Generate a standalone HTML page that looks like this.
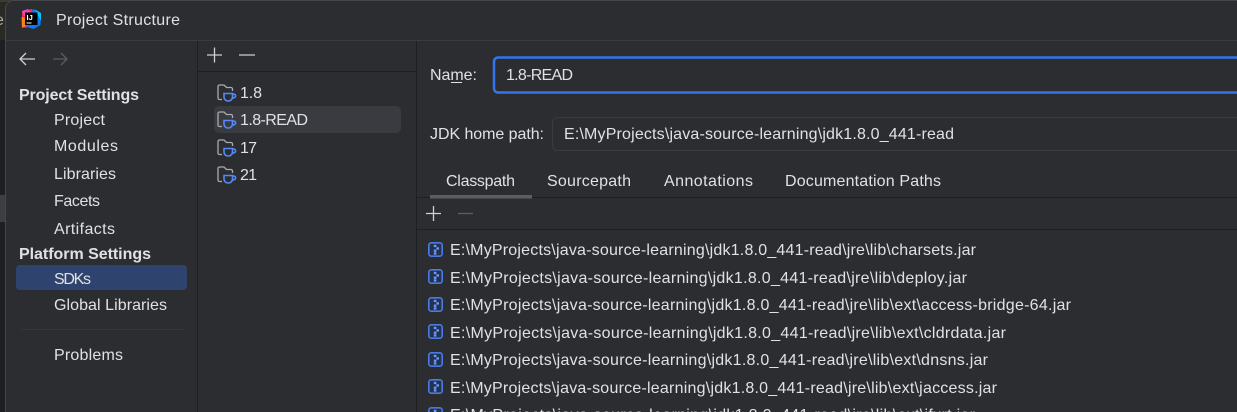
<!DOCTYPE html>
<html><head><meta charset="utf-8"><style>
html,body{margin:0;padding:0;width:1237px;height:412px;overflow:hidden;background:#1e1f22}
svg{display:block}
text{font-family:"Liberation Sans",sans-serif;font-size:16px;fill:#dfe1e5}
.b{font-weight:bold}
.f{fill:none;stroke:#a8abb0;stroke-width:1.3}
.c{fill:none;stroke:#548af7;stroke-width:1.6}
.j{fill:#25324f;stroke:#4a7be0;stroke-width:1.6}
.d{fill:#6b9bfa}
.t{stroke:#ced0d6;stroke-width:1.3;fill:none}
</style></head><body>
<svg width="1237" height="412" viewBox="0 0 1237 412" xmlns="http://www.w3.org/2000/svg">
<defs>
<g id="sdk">
<path class="f" d="M5 15.500H2.500a1.500 1.500 0 0 1-1.500-1.500V2.500a1.500 1.500 0 0 1 1.500-1.500H7l2.500 2.500h4.500a1.500 1.500 0 0 1 1.500 1.500V7"/>
<path class="c" d="M7 9.500h8.500v3.500a4 4 0 0 1-4 4h-.5a4 4 0 0 1-4-4z"/>
<path class="c" d="M15.500 10h1.200a1.900 1.900 0 0 1 0 3.800h-1.400"/>
</g>
<g id="jar">
<rect class="j" x=".8" y=".8" width="13.400" height="13.400" rx="2.500"/>
<rect class="d" x="5.800" y="2.800" width="2.600" height="2.300"/>
<rect class="d" x="8.400" y="5.300" width="2.600" height="2.300"/>
<rect class="d" x="5.800" y="7.600" width="2.600" height="2.300"/>
<rect class="d" x="5.800" y="10.300" width="2.600" height="2.300"/>
</g>
</defs>

<rect width="1237" height="412" fill="#1e1f22"/>
<rect width="6" height="40" fill="#2a2a24"/>
<rect width="1237" height="2" fill="#3d3c2f"/>
<rect x="0" y="195" width="5" height="27" fill="#3c3e41"/>
<text x="-5" y="25" style="fill:#a9a99c">e</text>
<text x="-6" y="105" style="fill:#8a8c90">r</text>

<rect x="5.500" y=".5" width="1240" height="420" rx="8" fill="#2b2d30" stroke="#45474b"/>
<rect x="6" y="40" width="1231" height="1" fill="#393b40"/>
<rect x="197" y="41" width="1" height="371" fill="#1e1f22"/>
<rect x="416" y="41" width="1" height="371" fill="#1e1f22"/>
<rect x="198" y="71" width="218" height="1" fill="#1e1f22"/>

<!-- logo -->
<path d="M22 11l10-2 2 9-8 10-4-1z" fill="#fe2857"/>
<path d="M22 11l6-2 3 4-7 3z" fill="#e84bc0"/>
<path d="M21.500 17l5 1-1 8-3.500 2z" fill="#fc801d"/>
<path d="M33 9l8 4-.500 12-7 4-7-2z" fill="#087cfa"/>
<path d="M35 9.500l6 3.500v8z" fill="#07c3f2"/>
<rect x="25" y="12.500" width="12.500" height="12.500" fill="#000"/>
<text x="26.500" y="20" class="b" style="font-size:7.500px;fill:#fff">IJ</text>
<rect x="26.500" y="22.500" width="5" height="1" fill="#fff"/>
<text x="56" y="25" textLength="124" lengthAdjust="spacing">Project Structure</text>

<!-- nav arrows -->
<path d="M35 59H20M26 53l-6 6 6 6" fill="none" stroke="#ced0d6" stroke-width="1.300"/>
<path d="M53 59h14M61 53l6 6-6 6" fill="none" stroke="#5a5d63" stroke-width="1.300"/>

<!-- sidebar -->
<rect x="16" y="265" width="171" height="25" rx="4" fill="#2e436e"/>
<text x="19" y="100" class="b" textLength="120" lengthAdjust="spacing">Project Settings</text>
<text x="54" y="125" textLength="51" lengthAdjust="spacing">Project</text>
<text x="54" y="151" textLength="64" lengthAdjust="spacing">Modules</text>
<text x="54" y="179" textLength="62" lengthAdjust="spacing">Libraries</text>
<text x="54" y="206" textLength="46" lengthAdjust="spacing">Facets</text>
<text x="54" y="234" textLength="61" lengthAdjust="spacing">Artifacts</text>
<text x="19" y="259" class="b" textLength="132" lengthAdjust="spacing">Platform Settings</text>
<text x="54" y="284" textLength="37" lengthAdjust="spacing">SDKs</text>
<text x="54" y="310" textLength="113" lengthAdjust="spacing">Global Libraries</text>
<rect x="22" y="329" width="163" height="1" fill="#35373b"/>
<text x="54" y="360" textLength="69" lengthAdjust="spacing">Problems</text>

<!-- SDK list -->
<path class="t" d="M214.500 47.500v15M207 55h15M239 55h16"/>
<rect x="214" y="106" width="187" height="27" rx="5" fill="#393b40"/>
<use href="#sdk" x="217" y="84"/>
<use href="#sdk" x="217" y="111"/>
<use href="#sdk" x="217" y="139"/>
<use href="#sdk" x="217" y="166"/>
<text x="240" y="98" textLength="22" lengthAdjust="spacing">1.8</text>
<text x="240" y="125" textLength="68" lengthAdjust="spacing">1.8-READ</text>
<text x="240" y="153" textLength="17" lengthAdjust="spacing">17</text>
<text x="240" y="180" textLength="17" lengthAdjust="spacing">21</text>

<!-- form -->
<text x="430" y="80" textLength="47" lengthAdjust="spacing">Name:</text>
<rect x="451" y="82" width="11" height="1" fill="#dfe1e5"/>
<rect x="494" y="57.500" width="760" height="35" rx="4" fill="#2b2d30" stroke="#3574f0" stroke-width="2.500"/>
<text x="506" y="80" textLength="67" lengthAdjust="spacing">1.8-READ</text>
<text x="430" y="139" textLength="114" lengthAdjust="spacing">JDK home path:</text>
<rect x="552.500" y="117.500" width="760" height="33" rx="5" fill="#2b2d30" stroke="#393b40"/>
<text x="564" y="139" textLength="390" lengthAdjust="spacing">E:\MyProjects\java-source-learning\jdk1.8.0_441-read</text>

<!-- tabs -->
<text x="446" y="186" textLength="69" lengthAdjust="spacing">Classpath</text>
<text x="547" y="186" textLength="84" lengthAdjust="spacing">Sourcepath</text>
<text x="664" y="186" textLength="89" lengthAdjust="spacing">Annotations</text>
<text x="785" y="186" textLength="156" lengthAdjust="spacing">Documentation Paths</text>
<rect x="417" y="197" width="820" height="1" fill="#1e1f22"/>
<rect x="430" y="195" width="102" height="3.500" fill="#5a5d63"/>
<path class="t" d="M433.500 206v15M426 213.500h15"/>
<path d="M458 213.500h15" stroke="#5a5d63" stroke-width="1.300"/>
<rect x="417" y="229" width="820" height="1" fill="#1e1f22"/>

<!-- classpath list -->
<use href="#jar" x="428" y="242"/>
<use href="#jar" x="428" y="269"/>
<use href="#jar" x="428" y="297"/>
<use href="#jar" x="428" y="324"/>
<use href="#jar" x="428" y="352"/>
<use href="#jar" x="428" y="379"/>
<use href="#jar" x="428" y="407"/>
<text x="450" y="255" textLength="526" lengthAdjust="spacing">E:\MyProjects\java-source-learning\jdk1.8.0_441-read\jre\lib\charsets.jar</text>
<text x="450" y="283" textLength="517" lengthAdjust="spacing">E:\MyProjects\java-source-learning\jdk1.8.0_441-read\jre\lib\deploy.jar</text>
<text x="450" y="310" textLength="621" lengthAdjust="spacing">E:\MyProjects\java-source-learning\jdk1.8.0_441-read\jre\lib\ext\access-bridge-64.jar</text>
<text x="450" y="338" textLength="556" lengthAdjust="spacing">E:\MyProjects\java-source-learning\jdk1.8.0_441-read\jre\lib\ext\cldrdata.jar</text>
<text x="450" y="365" textLength="538" lengthAdjust="spacing">E:\MyProjects\java-source-learning\jdk1.8.0_441-read\jre\lib\ext\dnsns.jar</text>
<text x="450" y="393" textLength="547" lengthAdjust="spacing">E:\MyProjects\java-source-learning\jdk1.8.0_441-read\jre\lib\ext\jaccess.jar</text>
<text x="450" y="420" textLength="525" lengthAdjust="spacing">E:\MyProjects\java-source-learning\jdk1.8.0_441-read\jre\lib\ext\jfxrt.jar</text>
</svg>
</body></html>
